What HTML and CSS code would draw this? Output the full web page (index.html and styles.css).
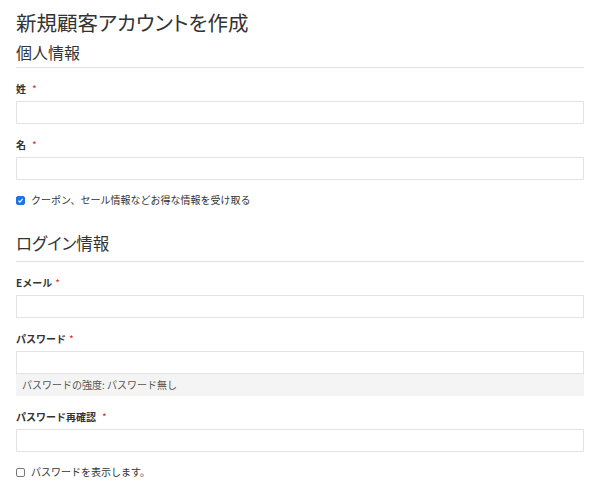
FILE: index.html
```html
<!DOCTYPE html>
<html lang="ja">
<head>
<meta charset="utf-8">
<link rel="stylesheet" href="styles.css">
</head>
<body>
<div class="page">
  <h1 class="title">新規顧客アカウントを作成</h1>
  <fieldset class="section">
    <h2 class="legend legend-small">個人情報</h2>
    <div class="field">
      <label class="label">姓<span class="req wide">*</span></label>
      <div class="input"></div>
    </div>
    <div class="field">
      <label class="label">名<span class="req wide">*</span></label>
      <div class="input"></div>
    </div>
    <div class="check">
      <span class="box checked"><svg viewBox="0 0 10 10" width="9" height="9"><path d="M2 5.2 L4.2 7.3 L8 2.8" fill="none" stroke="#fff" stroke-width="1.6"/></svg></span>
      <span>クーポン、セール情報などお得な情報を受け取る</span>
    </div>
  </fieldset>
  <fieldset class="section login">
    <h2 class="legend legend-large">ログイン情報</h2>
    <div class="field">
      <label class="label">Eメール<span class="req">*</span></label>
      <div class="input"></div>
    </div>
    <div class="field">
      <label class="label">パスワード<span class="req">*</span></label>
      <div class="input"></div>
      <div class="meter">パスワードの強度: パスワード無し</div>
    </div>
    <div class="field">
      <label class="label">パスワード再確認<span class="req wide">*</span></label>
      <div class="input"></div>
    </div>
    <div class="check">
      <span class="box"></span>
      <span>パスワードを表示します。</span>
    </div>
  </fieldset>
</div>
</body>
</html>
```

FILE: styles.css
```css
* { box-sizing: border-box; }
html, body { margin: 0; padding: 0; background: #fff; }
body {
  font-family: "Noto Sans CJK JP", "Noto Sans", sans-serif;
  color: #333;
}
.page { padding: 8px 16px 0; }
.title {
  margin: 0;
  font-size: 20.5px;
  font-weight: 400;
  line-height: 28px;
  font-feature-settings: "palt";
}
.section { border: 0; margin: 0; padding: 0; }
.legend {
  margin: 0;
  font-weight: 400;
  border-bottom: 1px solid #e2e2e2;
}
.legend-small { font-size: 16px; line-height: 24px; padding: 4px 0 3px; }
.legend-large { font-size: 16.5px; line-height: 26px; padding: 0 0 5px; font-feature-settings: "palt"; }
.login { margin-top: 23px; }
.field { margin-top: 14px; }
.label {
  display: flex;
  align-items: center;
  font-size: 10px;
  font-weight: 700;
  line-height: 14px;
  margin-bottom: 5px;
}
.req { color: #e02b27; font-weight: 400; margin-left: 3px; }
.req.wide { margin-left: 6px; }
.input {
  height: 23px;
  border: 1px solid #e3e3e3;
  background: #fff;
}
.meter {
  height: 22px;
  background: #f4f4f4;
  font-size: 10px;
  line-height: 22px;
  color: #555;
  padding-left: 6px;
}
.check {
  display: flex;
  align-items: center;
  gap: 6px;
  font-size: 10px;
  line-height: 14px;
  margin-top: 13px;
}
.box {
  width: 9px;
  height: 9px;
  border: 1px solid #777;
  border-radius: 2px;
  display: inline-flex;
  align-items: center;
  justify-content: center;
}
.box.checked { background: #1a73e8; border-color: #1a73e8; }
.box svg { display: block; }
```
